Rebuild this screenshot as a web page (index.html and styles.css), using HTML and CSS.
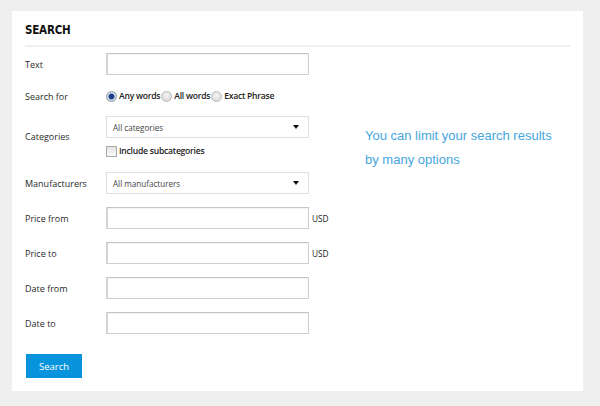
FILE: index.html
```html
<!DOCTYPE html>
<html>
<head>
<meta charset="utf-8">
<link rel="stylesheet" href="styles.css">
</head>
<body>
<div class="panel">
  <h1 class="title">SEARCH</h1>
  <div class="content">
    <form class="form">
      <div class="row">
        <label class="label">Text</label>
        <input class="field" type="text">
      </div>
      <div class="row row-radios">
        <label class="label">Search for</label>
        <div class="radios">
          <span class="radio checked"></span><span class="opt">Any words</span>
          <span class="radio"></span><span class="opt">All words</span>
          <span class="radio"></span><span class="opt">Exact Phrase</span>
        </div>
      </div>
      <div class="row row-cat">
        <label class="label">Categories</label>
        <div class="stack">
          <div class="select"><span>All categories</span><span class="caret"></span></div>
          <div class="check"><span class="box"></span><span class="opt">Include subcategories</span></div>
        </div>
      </div>
      <div class="row">
        <label class="label">Manufacturers</label>
        <div class="select"><span>All manufacturers</span><span class="caret"></span></div>
      </div>
      <div class="row">
        <label class="label">Price from</label>
        <input class="field" type="text"><span class="unit">USD</span>
      </div>
      <div class="row">
        <label class="label">Price to</label>
        <input class="field" type="text"><span class="unit">USD</span>
      </div>
      <div class="row">
        <label class="label">Date from</label>
        <input class="field" type="text">
      </div>
      <div class="row">
        <label class="label">Date to</label>
        <input class="field" type="text">
      </div>
      <button class="btn" type="button">Search</button>
    </form>
    <p class="hint">You can limit your search results<br>by many options</p>
  </div>
</div>
</body>
</html>
```

FILE: styles.css
```css
html, body {
  margin: 0;
  padding: 0;
}
body {
  background: #efefef;
  width: 600px;
  height: 406px;
  padding: 11px 0 0 12px;
  box-sizing: border-box;
  font-family: "Open Sans", "Liberation Sans", sans-serif;
  color: #333;
}
.panel {
  width: 571px;
  height: 380px;
  background: #fff;
  box-sizing: border-box;
  padding: 0 13px 0 13px;
}
.title {
  margin: 0;
  padding-top: 10px;
  height: 24px;
  line-height: 18px;
  font-family: "DejaVu Sans Condensed", "DejaVu Sans", sans-serif;
  font-weight: bold;
  font-size: 11.5px;
  letter-spacing: -0.2px;
  color: #111;
  border-bottom: 2px solid #f0f0f0;
}
.content {
  display: flex;
  padding-top: 6px;
}
.form {
  width: 340px;
  flex: none;
  margin: 0;
}
.row {
  display: flex;
  align-items: center;
  margin-bottom: 13px;
  font-size: 9px;
}
.label {
  width: 81px;
  flex: none;
  color: #2a2a2a;
}
.field {
  width: 203px;
  height: 22px;
  box-sizing: border-box;
  margin: 0;
  padding: 0;
  border: 1px solid #cfcfcf;
  border-top-color: #c4c4c4;
  border-left: 2px solid #d4d4d4;
  background: #fff;
  box-shadow: inset 0 1px 1px #f2f2f2;
}
.unit {
  margin-left: 3px;
  font-size: 8.3px;
  color: #222;
}
.row-radios {
  height: 16px;
  margin-top: 1px;
  margin-bottom: 12px;
}
.radios {
  display: flex;
  align-items: center;
}
.radio {
  width: 9px;
  height: 9px;
  border-radius: 50%;
  border: 1px solid #bdbdbd;
  background: radial-gradient(circle at 50% 40%, #f6f6f6, #cfcfcf);
  margin-right: 2px;
  box-sizing: content-box;
}
.radio.checked {
  border-color: #8a9aa8;
  background: radial-gradient(circle, #1d3f8a 0, #1d3f8a 2.5px, #dfe6ee 3.5px, #b9c4d0 100%);
}
.opt {
  font-weight: 600;
  font-size: 8.6px;
  color: #222;
  margin-right: 1px;
  letter-spacing: -0.25px;
}
.row-cat {
  margin-bottom: 15px;
}
.stack {
  display: flex;
  flex-direction: column;
}
.select {
  width: 203px;
  height: 22px;
  box-sizing: border-box;
  border: 1px solid #e0e0e0;
  display: flex;
  align-items: center;
  justify-content: space-between;
  padding: 0 9px 0 6px;
  font-size: 8.1px;
  color: #444;
  background: #fff;
}
.caret {
  width: 0;
  height: 0;
  border-left: 3.5px solid transparent;
  border-right: 3.5px solid transparent;
  border-top: 4px solid #111;
}
.check {
  display: flex;
  align-items: center;
  margin-top: 7px;
  height: 12px;
}
.box {
  width: 9px;
  height: 9px;
  border: 1px solid #a8a8a8;
  background: linear-gradient(#e4e4e4, #f8f8f8);
  margin-right: 2px;
}
.btn {
  display: block;
  margin-top: 20px;
  margin-left: 1px;
  width: 56px;
  height: 24px;
  border: 0;
  background: #0794dc;
  color: #fff;
  font-family: "Open Sans", "Liberation Sans", sans-serif;
  font-size: 9.5px;
  padding: 0;
}
.hint {
  margin: 71px 0 0 0;
  white-space: nowrap;
  font-family: "Liberation Sans", Arial, sans-serif;
  font-size: 13px;
  line-height: 24px;
  color: #45a6de;
}
```
